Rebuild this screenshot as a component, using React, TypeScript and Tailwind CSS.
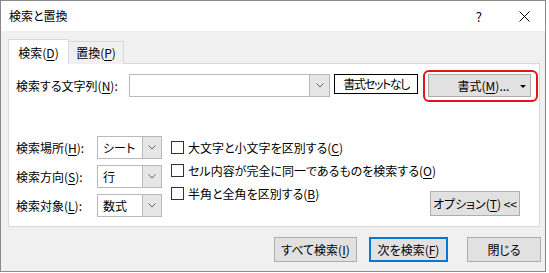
import React from "react";

const font = {
  fontFamily: '"Noto Sans CJK JP", "Noto Sans", sans-serif',
};

function U({ children }: { children: React.ReactNode }) {
  return <span className="underline underline-offset-2">{children}</span>;
}

function Chevron() {
  return (
    <svg width="8" height="5" viewBox="0 0 8 5" className="block">
      <path d="M0.5 0.5 L4 4 L7.5 0.5" fill="none" stroke="#606060" strokeWidth="1" />
    </svg>
  );
}

function Select({ value }: { value: string }) {
  return (
    <div className="flex h-[23px] w-[65px] border border-[#b9b9b9] bg-white">
      <div className="flex flex-1 items-center pl-[5px] text-[12px] leading-none text-black">{value}</div>
      <div className="flex w-[19px] items-center justify-center border-l border-[#b9b9b9] bg-[#e6e6e6]">
        <Chevron />
      </div>
    </div>
  );
}

function Check({ children }: { children: React.ReactNode }) {
  return (
    <div className="flex h-[23px] items-center">
      <div className="h-[13px] w-[13px] shrink-0 border border-[#333] bg-white" />
      <div className="ml-[4px] whitespace-nowrap text-[12px] leading-none text-black">{children}</div>
    </div>
  );
}

export default function App() {
  return (
    <div
      className="h-[273px] w-[549px] bg-white"
      style={{ ...font, fontFeatureSettings: '"palt"' }}
    >
      <div className="flex h-[272px] w-[546px] flex-col border border-[#8a8a8a]">
        {/* title bar */}
        <div className="flex h-[30px] items-center bg-white pl-[8px]">
          <div className="text-[12px] leading-none text-black">検索と置換</div>
          <div className="ml-auto mr-[37px] text-[13px] leading-none text-black">?</div>
          <svg width="11" height="11" viewBox="0 0 11 11" className="mr-[15px]">
            <path d="M0.5 0.5 L10.5 10.5 M10.5 0.5 L0.5 10.5" stroke="#000" strokeWidth="1" />
          </svg>
        </div>
        {/* body */}
        <div className="flex flex-1 flex-col bg-[#f0f0f0] pl-[7px] pt-[8px]">
          {/* tabs */}
          <div className="relative z-10 -mb-px flex h-[25px] items-end">
            <div className="flex h-[25px] w-[61px] items-center justify-center border border-b-0 border-[#d9d9d9] bg-white pt-[1px] text-[12px] leading-none text-black">
              検索(<U>D</U>)
            </div>
            <div className="flex h-[23px] w-[55px] items-center justify-center border border-b-0 border-l-0 border-[#d9d9d9] bg-[#f0f0f0] text-[12px] leading-none text-black">
              置換(<U>P</U>)
            </div>
          </div>
          {/* panel */}
          <div className="flex h-[164px] w-[532px] flex-col border border-[#d9d9d9] bg-white pl-[7px] pt-[6px]">
            <div className="flex items-start">
              <div className="mt-[4px] flex h-[23px] w-[113px] items-center text-[12px] leading-none text-black">
                検索する文字列(<U>N</U>):
              </div>
              <div className="mt-[4px] flex h-[23px] w-[201px] border border-[#b9b9b9] bg-white">
                <div className="flex-1" />
                <div className="flex w-[20px] items-center justify-center border-l border-[#b9b9b9] bg-[#e6e6e6]">
                  <Chevron />
                </div>
              </div>
              <div className="ml-[4px] mt-[4px] flex h-[20px] w-[84px] items-center justify-center whitespace-nowrap border border-black bg-white text-[12px] leading-none tracking-[-1.5px] text-black">
                書式セットなし
              </div>
              <div className="ml-[5px] rounded-[6px] border-2 border-[#e0161e] pb-[3px] pl-[3px] pr-[5px] pt-[2px]">
                <div className="relative flex h-[23px] w-[103px] items-center justify-center border border-[#adadad] bg-[#e1e1e1] pl-[8px] text-[12px] leading-none text-black">
                  書式(<U>M</U>)...
                  <svg width="6" height="3" viewBox="0 0 6 3" className="absolute right-[4px] top-[10px]">
                    <path d="M0 0 L6 0 L3 3 Z" fill="#000" />
                  </svg>
                </div>
              </div>
            </div>
            <div className="mt-[34px] flex items-start">
              <div className="grid shrink-0 grid-cols-[81px_65px] gap-y-[6px]">
                <div className="flex h-[23px] items-center text-[12px] leading-none text-black">
                  検索場所(<U>H</U>):
                </div>
                <Select value="シート" />
                <div className="flex h-[23px] items-center text-[12px] leading-none text-black">
                  検索方向(<U>S</U>):
                </div>
                <Select value="行" />
                <div className="flex h-[23px] items-center text-[12px] leading-none text-black">
                  検索対象(<U>L</U>):
                </div>
                <Select value="数式" />
              </div>
              <div className="ml-[9px] flex min-w-0 flex-1 flex-col">
                <Check>
                  大文字と小文字を区別する(<U>C</U>)
                </Check>
                <Check>
                  セル内容が完全に同一であるものを検索する(<U>O</U>)
                </Check>
                <Check>
                  半角と全角を区別する(<U>B</U>)
                </Check>
              </div>
              <div className="mr-[19px] mt-[55px] flex h-[25px] w-[90px] shrink-0 items-center justify-center whitespace-nowrap border border-[#adadad] bg-[#e1e1e1] text-[12px] leading-none text-black">
                オプション(<U>T</U>) &lt;&lt;
              </div>
            </div>
          </div>
          {/* bottom buttons */}
          <div className="mt-[10px] flex items-start">
            <div className="ml-[266px] flex h-[25px] w-[83px] items-center justify-center border border-[#adadad] bg-[#e1e1e1] text-[12px] leading-none text-black">
              すべて検索(<U>I</U>)
            </div>
            <div className="ml-[12px] flex h-[25px] w-[79px] items-center justify-center border-2 border-[#0078d7] bg-[#e1e1e1] text-[12px] leading-none text-black">
              次を検索(<U>F</U>)
            </div>
            <div className="ml-[19px] flex h-[25px] w-[74px] items-center justify-center border border-[#adadad] bg-[#e1e1e1] text-[12px] leading-none text-black">
              閉じる
            </div>
          </div>
        </div>
      </div>
    </div>
  );
}
